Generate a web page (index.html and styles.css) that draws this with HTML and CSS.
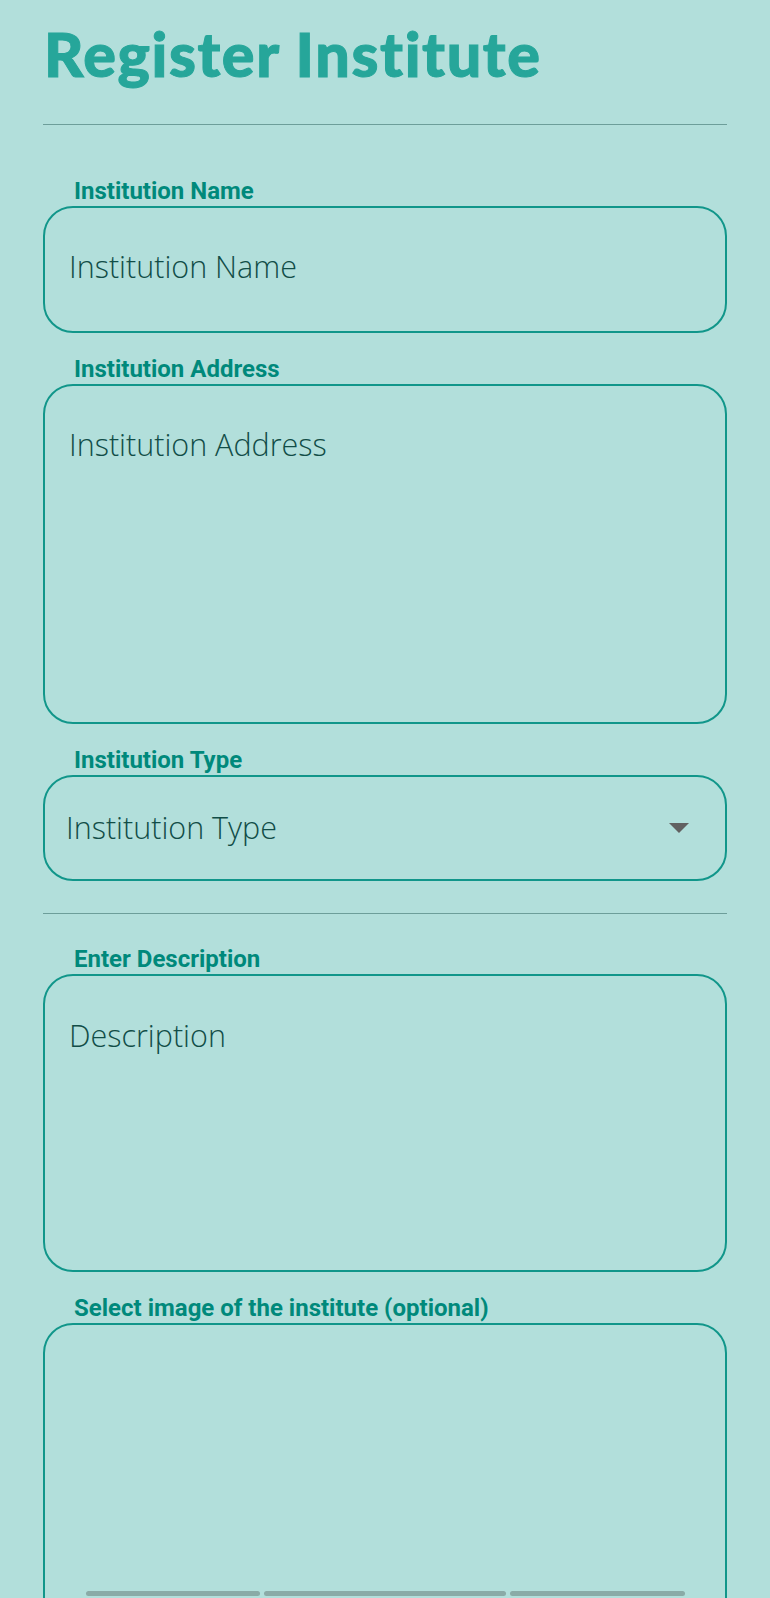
FILE: index.html
```html
<!DOCTYPE html>
<html lang="en">
<head>
<meta charset="utf-8">
<title>Register Institute</title>
<link rel="stylesheet" href="styles.css">
</head>
<body>
<main class="page">
  <h1 class="title">Register Institute</h1>
  <hr class="divider divider-top">

  <div class="field">
    <label class="label" for="name">Institution Name</label>
    <input class="box box-name" id="name" type="text" placeholder="Institution Name">
  </div>

  <div class="field">
    <label class="label" for="address">Institution Address</label>
    <textarea class="box box-address" id="address" placeholder="Institution Address"></textarea>
  </div>

  <div class="field">
    <label class="label">Institution Type</label>
    <div class="box box-select">
      <span class="select-text">Institution Type</span>
      <svg class="select-arrow" width="20" height="10" viewBox="0 0 20 10" aria-hidden="true"><path d="M0 0 H20 L10 10 Z" fill="#616161"/></svg>
    </div>
  </div>

  <hr class="divider divider-mid">

  <div class="field field-after-divider">
    <label class="label" for="desc">Enter Description</label>
    <textarea class="box box-desc" id="desc" placeholder="Description"></textarea>
  </div>

  <div class="field">
    <label class="label">Select image of the institute (optional)</label>
    <div class="box box-image">
      <div class="bars">
        <span class="bar"></span>
        <span class="bar"></span>
        <span class="bar"></span>
      </div>
    </div>
  </div>
</main>
</body>
</html>
```

FILE: styles.css
```css
html, body {
  margin: 0;
  padding: 0;
  background: #b2dfdb;
}

.page {
  padding: 0 43px;
  display: flex;
  flex-direction: column;
}

.title {
  margin: 17px 0 0 0;
  font-family: "Lato", "DejaVu Sans", sans-serif;
  font-weight: 900;
  font-size: 61px;
  line-height: 73px;
  letter-spacing: 1.6px;
  color: #26a69a;
  -webkit-text-stroke: 1px #26a69a;
  padding-left: 1px;
}

.divider {
  border: 0;
  height: 1px;
  background: #6d9e9a;
  margin: 0;
}

.divider-top {
  margin-top: 34px;
  margin-bottom: 52px;
}

.divider-mid {
  margin-top: 32px;
  margin-bottom: 31px;
}

.field {
  display: flex;
  flex-direction: column;
}

.field + .field {
  margin-top: 22px;
}

.label {
  font-family: "Roboto", "Liberation Sans", sans-serif;
  font-weight: 700;
  font-size: 24px;
  line-height: 28px;
  color: #00897b;
  padding-left: 31px;
  margin-bottom: 1px;
}

.box {
  box-sizing: border-box;
  width: 100%;
  margin: 0;
  border: 2px solid #11968a;
  border-radius: 30px;
  background: transparent;
  font-family: "Open Sans", "Liberation Sans", sans-serif;
  font-weight: 300;
  font-size: 30.5px;
  line-height: 40px;
  color: #114d47;
  outline: none;
  display: block;
}

.box::placeholder {
  color: #114d47;
  opacity: 1;
}

.box-name {
  height: 127px;
  padding: 38px 21px 45px 24px;
}

.box-address {
  height: 340px;
  padding: 38px 21px 0 24px;
  resize: none;
}

.box-select {
  height: 106px;
  padding: 0 36px 3px 21px;
  display: flex;
  align-items: center;
  justify-content: space-between;
}

.select-text {
  font-weight: 300;
}

.select-arrow {
  display: block;
  margin-top: 3px;
}

.box-desc {
  height: 298px;
  padding: 39px 21px 0 24px;
  resize: none;
}

.box-image {
  height: 320px;
  padding: 266px 40px 0 41px;
}

.bars {
  display: grid;
  grid-template-columns: 174fr 241fr 175fr;
  gap: 4px;
}

.bar {
  display: block;
  height: 5px;
  border-radius: 3px;
  background: #8aaba7;
}
```
